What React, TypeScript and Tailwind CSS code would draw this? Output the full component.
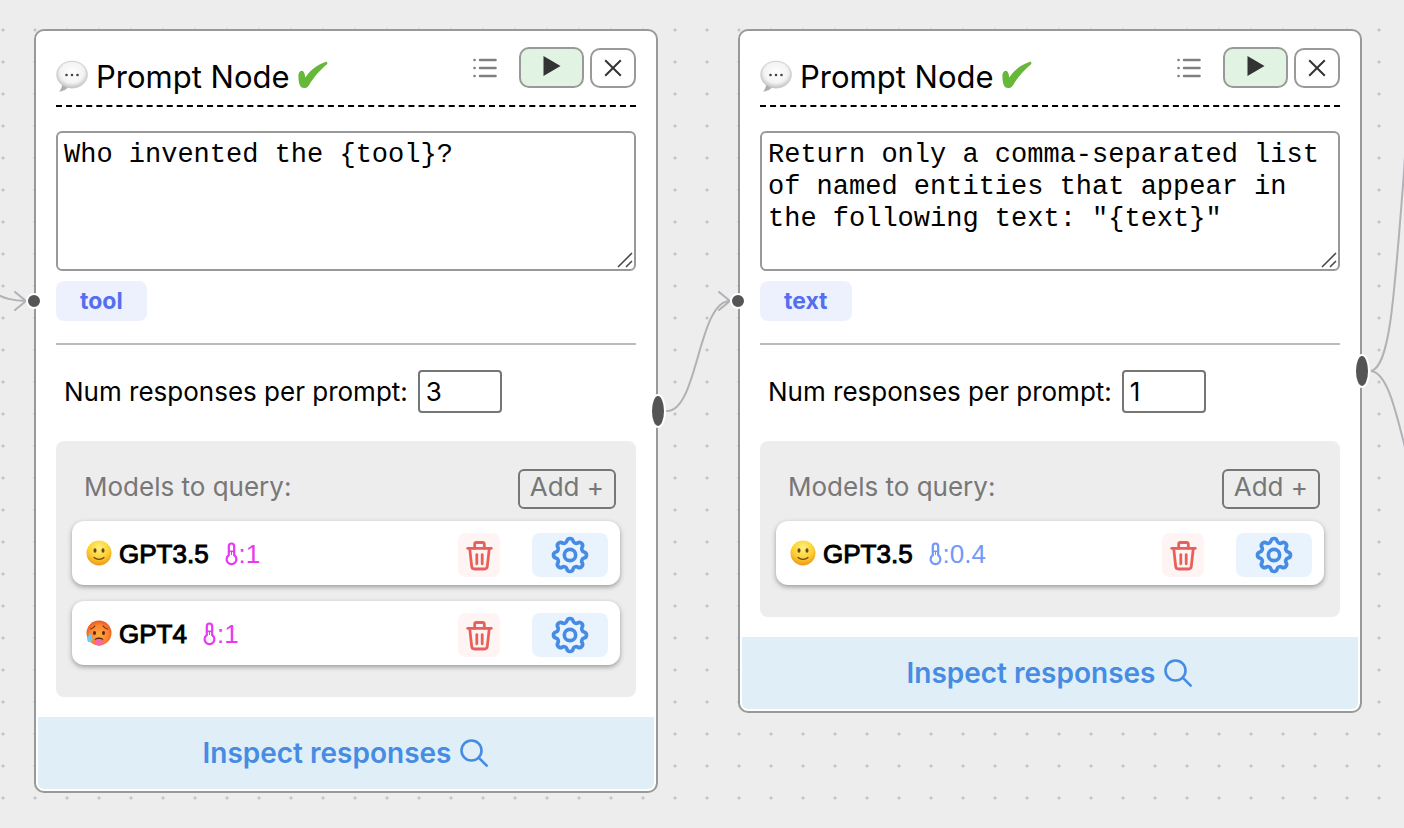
import { useState } from "react";

type Model = {
  name: string;
  mood: "smile" | "hot";
  temperature: string;
  tempClass: string;
};

type PromptNodeProps = {
  id: string;
  prompt: string;
  variable: string;
  numResponses: number;
  models: Model[];
  outputClass: string;
};

function BubbleIcon() {
  return (
    <svg width="32" height="34" viewBox="0 0 32 34" aria-hidden="true">
      <defs>
        <radialGradient id="bubble" cx="50%" cy="42%" r="60%">
          <stop offset="0" stopColor="#ffffff" />
          <stop offset="0.65" stopColor="#f3f3f3" />
          <stop offset="1" stopColor="#bdbdbd" />
        </radialGradient>
      </defs>
      <path d="M6 23c.4 3.500-.8 6-2.800 8.800 4-.6 7.800-2.800 9.800-5.600z" fill="#adadad" />
      <path
        d="M16 1.200C7.500 1.200.8 7 .8 14.600S7.500 28 16 28s15.300-5.800 15.300-13.400S24.500 1.200 16 1.200z"
        fill="url(#bubble)"
        stroke="#c4c4c4"
        strokeWidth="0.8"
      />
      <circle cx="10.500" cy="15" r="1.300" fill="#444" />
      <circle cx="16" cy="15" r="1.300" fill="#444" />
      <circle cx="21.500" cy="15" r="1.300" fill="#444" />
    </svg>
  );
}

function CheckIcon() {
  return (
    <svg width="30" height="28" viewBox="0 0 30 28" aria-hidden="true">
      <path
        d="M.4 14.500c0-2.600 1.600-4.700 3.400-4.700 2 0 2.900 2.300 3.500 6.600C11.500 10.200 18.500 3.500 27.400.9c1.700-.5 2.600.9 1.600 2.300C22.500 8.500 15.500 16.500 11 24.200c-1.200 2-3 2.800-5 2.800-4 0-5.600-4.500-5.600-12.500z"
        fill="#66b83a"
      />
    </svg>
  );
}

function SmileIcon() {
  return (
    <svg width="26" height="26" viewBox="0 0 26 26" aria-hidden="true">
      <defs>
        <radialGradient id="smile" cx="50%" cy="30%" r="68%">
          <stop offset="0" stopColor="#fff27a" />
          <stop offset="0.6" stopColor="#fdd033" />
          <stop offset="1" stopColor="#f09a17" />
        </radialGradient>
      </defs>
      <circle cx="13" cy="13" r="12.500" fill="url(#smile)" />
      <ellipse cx="9" cy="10.500" rx="1.500" ry="2.200" fill="#70421a" />
      <ellipse cx="17" cy="10.500" rx="1.500" ry="2.200" fill="#70421a" />
      <path d="M8 17.500c2.800 2.400 7.200 2.400 10 0" fill="none" stroke="#70421a" strokeWidth="1.200" strokeLinecap="round" />
    </svg>
  );
}

function HotIcon() {
  return (
    <svg width="26" height="26" viewBox="0 0 26 26" aria-hidden="true">
      <defs>
        <radialGradient id="hot" cx="50%" cy="55%" r="62%">
          <stop offset="0" stopColor="#ffab3f" />
          <stop offset="0.6" stopColor="#fb8430" />
          <stop offset="1" stopColor="#dd4322" />
        </radialGradient>
      </defs>
      <circle cx="13" cy="13" r="12.500" fill="url(#hot)" />
      <path d="M4.500 9c1.500-.3 3.500-1.500 4.300-3M21.500 9c-1.500-.3-3.500-1.500-4.300-3" fill="none" stroke="#7a2c12" strokeWidth="1.200" strokeLinecap="round" />
      <ellipse cx="8.500" cy="13" rx="1.500" ry="1.900" fill="#5c2410" />
      <ellipse cx="17.500" cy="13" rx="1.500" ry="1.900" fill="#5c2410" />
      <path d="M8.500 20.200c.2-1.800 2-2.600 4.500-2.600s4.300.8 4.500 2.600z" fill="#5c2410" />
      <path d="M9.300 19.800c1.500-1 5.900-1 7.400 0v2.800c0 4.200-7.400 4.200-7.400 0z" fill="#f26aa8" />
      <path d="M4 13.200c1.500 2.600 2.500 4.400 2.500 6 0 1.800-1.200 3-2.700 3s-2.700-1.200-2.700-3c0-1.600 1.700-3.400 2.900-6z" fill="#6ccbfa" />
    </svg>
  );
}

function ThermometerIcon() {
  return (
    <svg width="13" height="24" viewBox="0 0 13 24" fill="none" stroke="currentColor" aria-hidden="true">
      <path d="M3.800 13.200V4.200a2.700 2.700 0 0 1 5.400 0v9a4.900 4.900 0 1 1-5.400 0z" strokeWidth="2.200" />
      <path d="M4 9.300h5" strokeWidth="1.600" />
      <path d="M6.500 9.300V13" strokeWidth="1" />
    </svg>
  );
}

function TrashIcon() {
  return (
    <svg
      width="27"
      height="31"
      viewBox="0 0 28 32"
      fill="none"
      stroke="currentColor"
      strokeWidth="2.900"
      strokeLinecap="round"
      strokeLinejoin="round"
      aria-hidden="true"
    >
      <path d="M1.800 8.600h24.400" />
      <path d="M9 8.600V4.300c0-1 .8-1.800 1.800-1.800h6.400c1 0 1.800.8 1.800 1.800v4.300" />
      <path d="M3.900 9l2 18.300c.2 1.600 1.200 2.700 2.800 2.700h10.600c1.600 0 2.600-1.100 2.800-2.700l2-18.300" />
      <path d="M11.200 15v9.600M16.800 15v9.600" />
    </svg>
  );
}

function GearIcon() {
  return (
    <svg
      width="44"
      height="44"
      viewBox="0 0 24 24"
      fill="none"
      stroke="currentColor"
      strokeWidth="2"
      strokeLinejoin="round"
      aria-hidden="true"
    >
      <path d="M10.325 4.317c.426-1.756 2.924-1.756 3.350 0a1.724 1.724 0 0 0 2.573 1.066c1.543-.94 3.310.826 2.370 2.370a1.724 1.724 0 0 0 1.065 2.572c1.756.426 1.756 2.924 0 3.350a1.724 1.724 0 0 0-1.066 2.573c.94 1.543-.826 3.310-2.370 2.370a1.724 1.724 0 0 0-2.572 1.065c-.426 1.756-2.924 1.756-3.350 0a1.724 1.724 0 0 0-2.573-1.066c-1.543.94-3.310-.826-2.370-2.370a1.724 1.724 0 0 0-1.065-2.572c-1.756-.426-1.756-2.924 0-3.350a1.724 1.724 0 0 0 1.066-2.573c-.94-1.543.826-3.310 2.370-2.370 1 .608 2.296.07 2.572-1.065z" />
      <circle cx="12" cy="12" r="3.100" />
    </svg>
  );
}

function ModelCard({ model }: { model: Model }) {
  return (
    <li className="flex h-16 items-center rounded-xl bg-white pl-[14px] pr-3 shadow-[0_2px_5px_rgba(0,0,0,0.35)]">
      {model.mood === "smile" ? <SmileIcon /> : <HotIcon />}
      <span className="ml-[7px] pt-[2px] text-[26px] leading-8 text-black [-webkit-text-stroke:1px_black]">{model.name}</span>
      <span className={`ml-4 flex items-center gap-px pt-[2px] text-[26px] leading-8 ${model.tempClass}`}>
        <ThermometerIcon />:{model.temperature}
      </span>
      <div className="ml-auto flex gap-8 pt-1">
        <button
          aria-label={`Remove ${model.name}`}
          className="flex h-11 w-[42px] items-center justify-center rounded-lg bg-[#fef4f4] text-[#e8605a]"
        >
          <TrashIcon />
        </button>
        <button
          aria-label={`Settings for ${model.name}`}
          className="flex h-11 w-[76px] items-center justify-center rounded-lg bg-[#e8f3fe] text-[#468ce2]"
        >
          <GearIcon />
        </button>
      </div>
    </li>
  );
}

function PromptNode({ id, prompt, variable, numResponses, models, outputClass }: PromptNodeProps) {
  const [text, setText] = useState(prompt);
  const [count, setCount] = useState(numResponses);

  return (
    <section className="relative w-[624px] rounded-[10px] border-2 border-[#999] bg-white font-[Inter,sans-serif] text-black">
      <div className="px-5">
        <header className="flex h-[74px] items-start pt-4">
          <div className="mt-2 flex h-11 items-center">
            <BubbleIcon />
            <h2 className="ml-2 text-[31px] leading-10">Prompt Node</h2>
            <span className="mb-1 ml-2">
              <CheckIcon />
            </span>
          </div>
          <div className="ml-auto flex items-end">
            <button aria-label="List prompts" className="mr-5 flex h-10 w-7 items-center justify-center text-[#808080]">
              <svg width="26" height="22" viewBox="0 0 26 22" stroke="currentColor" strokeWidth="2.600" strokeLinecap="round">
                <path d="M2.500 3h.1M2.500 11h.1M2.500 19h.1M8 3h15.500M8 11h15.500M8 19h15.500" />
              </svg>
            </button>
            <button aria-label="Run prompt" className="flex h-[41px] w-[65px] items-center justify-center rounded-[10px] border-2 border-[#999] bg-[#e1f3e3]">
              <svg width="18" height="20" viewBox="0 0 18 20" className="mb-1">
                <path d="M.5 0l17 10-17 10z" fill="#333" />
              </svg>
            </button>
            <button aria-label="Close node" className="ml-[6px] flex h-10 w-[46px] items-center justify-center rounded-[10px] border-2 border-[#999] bg-white">
              <svg width="18" height="18" viewBox="0 0 18 18" stroke="#333" strokeWidth="2">
                <path d="M1.200 1.200l15.600 15.600M16.800 1.200L1.200 16.800" />
              </svg>
            </button>
          </div>
        </header>
        <div className="border-t-2 border-dashed border-black" />

        <div className="relative mt-6">
          <textarea
            aria-label="Prompt"
            value={text}
            onChange={(e) => setText(e.target.value)}
            className="block h-[140px] w-full resize-none overflow-hidden rounded-md border-2 border-[#999] bg-white px-[6px] py-[6px] font-['Liberation_Mono',monospace] text-[27px] leading-8"
          />
          <svg width="16" height="16" viewBox="0 0 16 16" className="absolute bottom-[3px] right-[3px]" stroke="#444" strokeWidth="1.500">
            <path d="M1 15L15 1M9 15l6-6" />
          </svg>
        </div>

        <div className="mt-[10px] flex">
          <span className="flex h-10 items-center rounded-lg bg-[#edf1fe] px-6 text-[23px] font-bold text-[#546fee]">{variable}</span>
        </div>

        <hr className="mt-[22px] border-t-2 border-[#bbb]" />

        <div className="mt-[25px] flex items-center pl-2 text-[26px] leading-8">
          <label htmlFor={`${id}-count`}>Num responses per prompt:</label>
          <input
            id={`${id}-count`}
            type="text"
            inputMode="numeric"
            value={count}
            onChange={(e) => setCount(Number(e.target.value) || 0)}
            className="ml-[10px] h-[43px] w-[84px] rounded border-2 border-[#767676] bg-white px-[6px]"
          />
        </div>

        <div className="mt-7 rounded-lg bg-[#ededed] px-4 pb-8 pt-7">
          <div className="flex items-center justify-between pl-3 pr-1 text-[26px] text-[#777]">
            <h3 className="-mt-1 leading-8">Models to query:</h3>
            <button className="h-10 rounded-md border-2 border-[#777] px-[10px] pb-1 leading-8">Add +</button>
          </div>
          <ul className="mt-3 flex flex-col gap-4 font-['Liberation_Sans',sans-serif]">
            {models.map((model) => (
              <ModelCard key={model.name} model={model} />
            ))}
          </ul>
        </div>
      </div>

      <div className="flex px-[2px] pb-[2px] pt-5">
        <button className="flex h-[72px] w-full items-center justify-center gap-2 rounded-b-md bg-[#e0eff7] text-[28px] font-semibold text-[#468ce2]">
          Inspect responses
          <svg width="30" height="30" viewBox="0 0 30 30" fill="none" stroke="currentColor" strokeWidth="2.600" strokeLinecap="round" aria-hidden="true">
            <circle cx="12.500" cy="12.500" r="10" />
            <path d="M19.700 19.700l8 8" />
          </svg>
        </button>
      </div>

      <span className="absolute -left-[10px] top-[262px] size-4 rounded-full border-2 border-white bg-[#555]" />
      <span className={`absolute -right-[10px] h-[34px] w-4 rounded-[50%] border-2 border-white bg-[#555] ${outputClass}`} />
    </section>
  );
}

function Edges() {
  return (
    <svg className="pointer-events-none absolute left-0 top-0 overflow-visible" width="1404" height="828" fill="none" stroke="#b1b1b7" strokeWidth="2" aria-hidden="true">
      <path d="M-6 293C4 298 12 301 26 301M15 292l11 9-11 9" strokeLinecap="round" />
      <path d="M667 411C698 411 698 301 730 301M719 292l11 9-11 9" strokeLinecap="round" />
      <path d="M1371 371C1390 366 1394 300 1404 172L1408 110" />
      <path d="M1371 371C1388 373 1396 414 1404 443L1412 480" />
    </svg>
  );
}

const MAGENTA = "text-[#e838f2]";
const BLUE = "text-[#7099f8]";

export default function App() {
  return (
    <main className="relative min-h-screen overflow-hidden bg-[#ededed] bg-[radial-gradient(circle_at_center,#c4c4c4_1px,transparent_2px)] bg-[length:32px_32px] bg-[position:-13px_14px]">
      <Edges />
      <div className="absolute left-[34px] top-[29px]">
        <PromptNode
          id="inventor"
          prompt="Who invented the {tool}?"
          variable="tool"
          numResponses={3}
          models={[
            { name: "GPT3.5", mood: "smile", temperature: "1", tempClass: MAGENTA },
            { name: "GPT4", mood: "hot", temperature: "1", tempClass: MAGENTA },
          ]}
          outputClass="top-[363px]"
        />
      </div>
      <div className="absolute left-[738px] top-[29px]">
        <PromptNode
          id="entities"
          prompt={'Return only a comma-separated list of named entities that appear in the following text: "{text}"'}
          variable="text"
          numResponses={1}
          models={[{ name: "GPT3.5", mood: "smile", temperature: "0.4", tempClass: BLUE }]}
          outputClass="top-[323px]"
        />
      </div>
    </main>
  );
}
